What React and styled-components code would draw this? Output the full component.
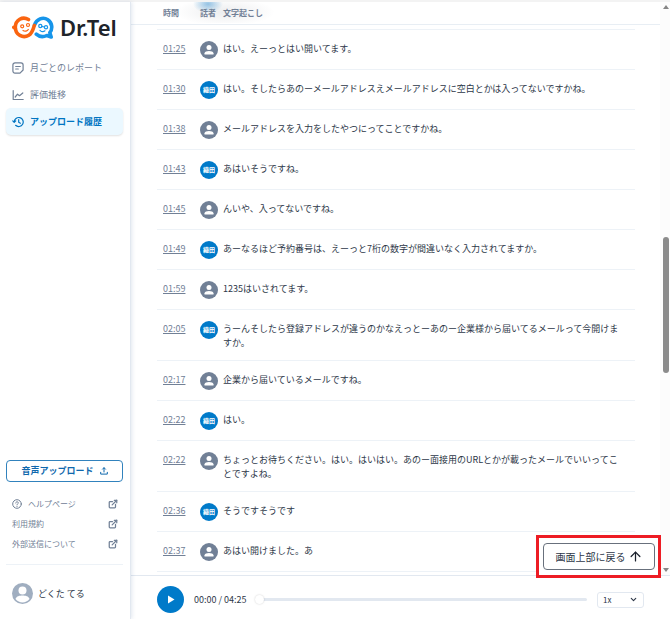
import React, { useState } from 'react';
import styled, { createGlobalStyle } from 'styled-components';
import { ArrowUp, ChevronDown, ExternalLink } from 'lucide-react';

const GlobalStyle = createGlobalStyle`
  * {
    box-sizing: border-box;
  }
  body {
    margin: 0;
    background: #fff;
    color: #2d3748;
    font-family: 'Noto Sans CJK JP', 'Noto Sans', sans-serif;
    font-size: 9px;
    line-height: 14px;
  }
  button, select, input {
    font-family: inherit;
    font-size: inherit;
    line-height: inherit;
    color: inherit;
    margin: 0;
  }
  svg {
    display: block;
    flex-shrink: 0;
  }
`;

const Page = styled.div`
  display: flex;
  flex-direction: column;
  height: 100vh;
  border-top: 2px solid #f3f3f3;
`;
const Columns = styled.div`
  display: flex;
  flex: 1;
  min-height: 0;
`;
const Sidebar = styled.aside`
  display: flex;
  flex-direction: column;
  width: 131px;
  flex-shrink: 0;
  padding: 12px 7px 13px 6px;
  border-right: 1px solid #e2e8f0;
  box-shadow: 1px 0 4px rgba(45, 85, 140, 0.14);
  z-index: 1;
`;
const Brand = styled.a`
  display: flex;
  align-items: center;
  gap: 6px;
  padding-left: 6px;
  margin-bottom: 14px;
  color: #20242a;
  font-family: 'Noto Sans', sans-serif;
  font-size: 22px;
  font-weight: 600;
  line-height: 26px;
  text-decoration: none;
`;
const Nav = styled.nav`
  display: flex;
  flex-direction: column;
`;
const NavItem = styled.a`
  display: flex;
  align-items: center;
  gap: 6px;
  height: 27px;
  padding: 0 6px;
  border-radius: 5px;
  color: ${(props) => (props.$active ? '#0075c2' : '#718096')};
  background: ${(props) => (props.$active ? '#ebf8ff' : 'transparent')};
  box-shadow: ${(props) => (props.$active ? '0 1px 2px rgba(0, 0, 0, 0.12)' : 'none')};
  font-weight: ${(props) => (props.$active ? 700 : 400)};
  text-decoration: none;
`;
const SidebarFooter = styled.div`
  margin-top: auto;
`;
const UploadButton = styled.button`
  display: flex;
  align-items: center;
  justify-content: center;
  gap: 6px;
  width: 100%;
  height: 22px;
  padding: 0;
  border: 1px solid #3182bd;
  border-radius: 4px;
  background: #fff;
  color: #0f68ad;
  font-weight: 700;
`;
const HelpLinks = styled.div`
  display: flex;
  flex-direction: column;
  padding: 12px 5px 10px 6px;
  border-bottom: 1px solid #edf2f7;
`;
const HelpLink = styled.a`
  display: flex;
  align-items: center;
  gap: 6px;
  height: 20px;
  color: #718096;
  font-size: 8px;
  text-decoration: none;
`;
const HelpLabel = styled.span`
  flex: 1;
`;
const Account = styled.div`
  display: flex;
  align-items: center;
  gap: 5px;
  padding: 18px 6px 2px;
`;

const Main = styled.main`
  position: relative;
  display: flex;
  flex-direction: column;
  flex: 1;
  min-width: 0;
`;
const Viewport = styled.div`
  display: flex;
  flex: 1;
  min-height: 0;
  overflow: hidden;
`;
const Transcript = styled.table`
  flex: 1;
  align-self: flex-start;
  width: 100%;
  border-collapse: collapse;
  table-layout: fixed;
`;
const TimeColumn = styled.col`
  width: 69px;
`;
const SpeakerColumn = styled.col`
  width: 23px;
`;
const HeadRow = styled.tr`
  height: 22px;
  border-bottom: 1px solid #e8eef4;
  background:
    radial-gradient(ellipse 15px 9px at 77px 2px, rgba(49, 140, 205, 0.5), transparent) no-repeat,
    radial-gradient(ellipse 50px 14px at 94px 10px, rgba(45, 55, 72, 0.09), transparent) no-repeat,
    #fff;
`;
const HeadCell = styled.th`
  padding: 1px 0 0 ${(props) => (props.$first ? '32px' : '0')};
  color: #718096;
  font-size: 8px;
  font-weight: 700;
  line-height: 12px;
  text-align: left;
  white-space: nowrap;
`;
const Row = styled.tr`
  background: linear-gradient(#edf2f7, #edf2f7) 26px 100% / calc(100% - 51px) 1px no-repeat;
`;
const GapCell = styled.td`
  height: 6px;
  padding: 0;
`;
const TimeCell = styled.td`
  padding: 12px 0 11px 32px;
  vertical-align: top;
`;
const TimeLink = styled.a`
  color: #718096;
  text-decoration: underline;
`;
const SpeakerCell = styled.td`
  padding: 11px 0;
  vertical-align: top;
`;
const TextCell = styled.td`
  padding: 12px 35px 11px 0;
  vertical-align: top;
`;
const Speaker = styled.span`
  display: flex;
  align-items: center;
  justify-content: center;
  width: 18px;
  height: 18px;
  border-radius: 50%;
  background: ${(props) => (props.$staff ? '#007ac9' : '#718096')};
  color: #fff;
  font-size: 6px;
  font-weight: 700;
  line-height: 8px;
  white-space: nowrap;
`;

const Scrollbar = styled.div`
  display: flex;
  flex-direction: column;
  align-items: center;
  width: 10px;
  flex-shrink: 0;
  padding: 3px 0 3px 2px;
  background: #fcfcfc;
`;
const Track = styled.div`
  display: flex;
  flex-direction: column;
  flex: 1;
  width: 6px;
`;
const TrackSpace = styled.div`
  flex: ${(props) => props.$grow};
`;
const Thumb = styled.div`
  flex: 135;
  border-radius: 3px;
  background: #8b8b8b;
`;

const Player = styled.div`
  display: flex;
  align-items: center;
  height: 44px;
  padding: 4px 26px 0;
  border-top: 1px solid #e2e8f0;
`;
const PlayButton = styled.button`
  display: flex;
  align-items: center;
  justify-content: center;
  width: 27px;
  height: 27px;
  padding: 0;
  border: 0;
  border-radius: 50%;
  background: #007ac9;
  color: #fff;
`;
const Elapsed = styled.span`
  margin: 0 8px 0 10px;
  white-space: nowrap;
`;
const Seek = styled.input`
  appearance: none;
  flex: 1;
  min-width: 0;
  height: 10px;
  background: transparent;
  &::-webkit-slider-runnable-track {
    height: 3px;
    border-radius: 2px;
    background: #e2e8f0;
  }
  &::-webkit-slider-thumb {
    appearance: none;
    width: 9px;
    height: 9px;
    margin-top: -3px;
    border-radius: 50%;
    background: #fff;
    box-shadow: 0 0 2px rgba(0, 0, 0, 0.2);
  }
`;
const Speed = styled.div`
  display: grid;
  align-items: center;
  margin-left: 10px;
  > * {
    grid-area: 1 / 1;
  }
  svg {
    justify-self: end;
    margin-right: 6px;
    pointer-events: none;
  }
`;
const SpeedSelect = styled.select`
  appearance: none;
  width: 47px;
  height: 16px;
  padding: 0 5px;
  border: 1px solid #e2e8f0;
  border-radius: 3px;
  background: #fff;
  font-size: 8px;
  line-height: 12px;
`;

const TopFrame = styled.div`
  position: absolute;
  right: 9px;
  bottom: 41px;
  padding: 5px 3px 5px 4px;
  border: 3px solid #ed1c24;
  background: #fff;
`;
const TopButton = styled.button`
  display: flex;
  align-items: center;
  justify-content: center;
  gap: 2px;
  width: 112px;
  height: 27px;
  padding: 0;
  border: 1px solid #68707c;
  border-radius: 4px;
  background: #fff;
  font-size: 10px;
  svg {
    color: #1a202c;
  }
`;

const Logo = () => (
  <svg width="42" height="23" viewBox="0 0 42 23" fill="none" aria-hidden="true">
    <path d="M21 3.500C27 .3 22 3 24.500 4.500" stroke="none" />
    <path d="M22.500 9C24.500 3 31 .4 35.800 3.800c4.700 3.300 5 9 2 12.800l1.400 4.400-4.400-1.500c-3.600 1.800-7.800 1.100-10.500-1.300" stroke="#1695ea" strokeWidth="3.600" strokeLinejoin="round" strokeLinecap="round" />
    <g stroke="#fa6410" strokeWidth="3.600" strokeLinecap="round">
      <path d="M16.500 3.500C10.500-.1 3.500 3.900 3.300 11.200c0 7.700 7.700 11.500 13.500 8C20.500 17 21 13.300 22.300 9.500" />
      <path d="M1.800 11.300l1.500 1" />
    </g>
    <g stroke="#fa6410" strokeWidth="1.200">
      <circle cx="10.200" cy="10.300" r="1.500" />
      <circle cx="16" cy="9" r="1.500" />
      <path d="M11 14.500c2 1.300 4.300.7 5.300-1" strokeLinecap="round" />
    </g>
    <g stroke="#1695ea" strokeWidth="1.200">
      <circle cx="28.300" cy="10" r="1.600" />
      <circle cx="34" cy="11.300" r="1.600" />
      <path d="M29.700 10.300l2.600.7M28 14.300c1.500 1.500 3.700 1.500 5 .5" strokeLinecap="round" />
    </g>
  </svg>
);

const ReportIcon = () => (
  <svg width="12" height="12" viewBox="0 0 12 12" fill="none" stroke="currentColor" strokeWidth="1.200" strokeLinecap="round" aria-hidden="true">
    <path d="M3 .9h6A2.100 2.100 0 0 1 11.100 3v5L8 11.100H3A2.100 2.100 0 0 1 .9 9V3A2.100 2.100 0 0 1 3 .9zM3.700 4.500h4.600M3.700 7h2.600" strokeLinejoin="round" />
  </svg>
);

const ChartIcon = () => (
  <svg width="12" height="12" viewBox="0 0 12 12" fill="none" stroke="currentColor" strokeWidth="1.200" aria-hidden="true">
    <path d="M1.200 1.500v9h10M3.200 8l2.300-2.800 2 1.500L10.800 4" strokeLinecap="round" strokeLinejoin="round" />
  </svg>
);

const HistoryIcon = () => (
  <svg width="12" height="12" viewBox="0 0 12 12" fill="none" stroke="currentColor" strokeWidth="1.200" strokeLinecap="round" strokeLinejoin="round" aria-hidden="true">
    <path d="M2.200 6a4.500 4.500 0 1 1 1.400 3.300M.8 4.900l1.400 1.500 1.500-1.500M6.700 3.700v2.500l1.700 1" />
  </svg>
);

const UploadIcon = () => (
  <svg width="8" height="8" viewBox="0 0 8 8" fill="none" stroke="currentColor" strokeLinecap="round" strokeLinejoin="round" aria-hidden="true">
    <path d="M4 5V.8M2.500 2.200L4 .7l1.500 1.500M.7 5.300v1.800h6.600V5.300" />
  </svg>
);

const HelpIcon = () => (
  <svg width="10" height="10" viewBox="0 0 10 10" fill="none" stroke="currentColor" strokeLinecap="round" aria-hidden="true">
    <circle cx="5" cy="5" r="4.300" />
    <path d="M3.700 4c0-1.700 2.700-1.600 2.600 0C6.300 4.900 5 4.900 5 5.900M5 7.400v.1" />
  </svg>
);

const PersonIcon = () => (
  <svg width="12" height="12" viewBox="0 0 12 12" fill="currentColor" aria-hidden="true">
    <circle cx="6" cy="3.500" r="2.500" />
    <path d="M1.500 10.500V9.300C1.500 7.800 4 7 6 7s4.500.8 4.500 2.300v1.200z" />
  </svg>
);

const AccountIcon = () => (
  <svg width="21" height="21" viewBox="0 0 21 21" aria-hidden="true">
    <circle cx="10.500" cy="10.500" r="10.500" fill="#a0aec0" />
    <circle cx="10.500" cy="7.500" r="4" fill="#fff" />
    <path d="M3.500 16c1-3 4-3.500 7-3.500s6 .5 7 3.500c-3.500 4.500-10.500 4.500-14 0z" fill="#fff" />
  </svg>
);

const navItems = [
  { label: '月ごとのレポート', icon: <ReportIcon /> },
  { label: '評価推移', icon: <ChartIcon /> },
  { label: 'アップロード履歴', icon: <HistoryIcon />, active: true },
];

const helpItems = [
  { label: 'ヘルプページ', icon: <HelpIcon /> },
  { label: '利用規約' },
  { label: '外部送信について' },
];

const lines = [
  { time: '01:25', text: 'はい。えーっとはい開いてます。' },
  { time: '01:30', staff: true, text: 'はい。そしたらあのーメールアドレスえメールアドレスに空白とかは入ってないですかね。' },
  { time: '01:38', text: 'メールアドレスを入力をしたやつにってことですかね。' },
  { time: '01:43', staff: true, text: 'あはいそうですね。' },
  { time: '01:45', text: 'んいや、入ってないですね。' },
  { time: '01:49', staff: true, text: 'あーなるほど予約番号は、えーっと7桁の数字が間違いなく入力されてますか。' },
  { time: '01:59', text: '1235はいされてます。' },
  { time: '02:05', staff: true, text: 'うーんそしたら登録アドレスが違うのかなえっとーあのー企業様から届いてるメールって今開けますか。' },
  { time: '02:17', text: '企業から届いているメールですね。' },
  { time: '02:22', staff: true, text: 'はい。' },
  { time: '02:22', text: 'ちょっとお待ちください。はい。はいはい。あのー面接用のURLとかが載ったメールでいいってことですよね。' },
  { time: '02:36', staff: true, text: 'そうですそうです' },
  { time: '02:37', text: 'あはい開けました。あ' },
];

const App = () => {
  const [position, setPosition] = useState(0);

  return (
    <Page>
      <GlobalStyle />
      <Columns>
        <Sidebar>
          <Brand href="#home">
            <Logo />
            Dr.Tel
          </Brand>
          <Nav>
            {navItems.map((item) => (
              <NavItem key={item.label} href="#nav" $active={item.active}>
                {item.icon}
                {item.label}
              </NavItem>
            ))}
          </Nav>
          <SidebarFooter>
            <UploadButton type="button">
              音声アップロード
              <UploadIcon />
            </UploadButton>
            <HelpLinks>
              {helpItems.map((item) => (
                <HelpLink key={item.label} href="#help">
                  {item.icon}
                  <HelpLabel>{item.label}</HelpLabel>
                  <ExternalLink size={10} strokeWidth={3} />
                </HelpLink>
              ))}
            </HelpLinks>
            <Account>
              <AccountIcon />
              どくた てる
            </Account>
          </SidebarFooter>
        </Sidebar>

        <Main>
          <Viewport>
            <Transcript>
              <colgroup>
                <TimeColumn />
                <SpeakerColumn />
                <col />
              </colgroup>
              <thead>
                <HeadRow>
                  <HeadCell $first>時間</HeadCell>
                  <HeadCell>話者</HeadCell>
                  <HeadCell>文字起こし</HeadCell>
                </HeadRow>
              </thead>
              <tbody>
                <Row aria-hidden="true">
                  <GapCell colSpan={3} />
                </Row>
                {lines.map((line, i) => (
                  <Row key={i}>
                    <TimeCell>
                      <TimeLink href="#play">{line.time}</TimeLink>
                    </TimeCell>
                    <SpeakerCell>
                      <Speaker $staff={line.staff}>{line.staff ? '織田' : <PersonIcon />}</Speaker>
                    </SpeakerCell>
                    <TextCell>{line.text}</TextCell>
                  </Row>
                ))}
              </tbody>
            </Transcript>
            <Scrollbar aria-hidden="true">
              <svg width="6" height="4" viewBox="0 0 6 4" fill="#858585">
                <path d="M3 0l3 4H0z" />
              </svg>
              <Track>
                <TrackSpace $grow={228} />
                <Thumb />
                <TrackSpace $grow={195} />
              </Track>
              <svg width="6" height="4" viewBox="0 0 6 4" fill="#858585">
                <path d="M0 0h6L3 4z" />
              </svg>
            </Scrollbar>
          </Viewport>
          <Player>
            <PlayButton type="button" aria-label="再生">
              <svg width="8" height="9" viewBox="0 0 8 9" fill="currentColor">
                <path d="M1 .5l6.500 4L1 8.500z" />
              </svg>
            </PlayButton>
            <Elapsed>00:00 / 04:25</Elapsed>
            <Seek
              type="range"
              aria-label="再生位置"
              min="0"
              max="265"
              value={position}
              onChange={(e) => setPosition(Number(e.target.value))}
            />
            <Speed>
              <SpeedSelect aria-label="再生速度" defaultValue="1">
                <option value="1">1x</option>
                <option value="2">2x</option>
              </SpeedSelect>
              <ChevronDown size={9} strokeWidth={3} />
            </Speed>
          </Player>
          <TopFrame>
            <TopButton type="button">
              画面上部に戻る
              <ArrowUp size={15} strokeWidth={2} />
            </TopButton>
          </TopFrame>
        </Main>
      </Columns>
    </Page>
  );
};

export default App;
